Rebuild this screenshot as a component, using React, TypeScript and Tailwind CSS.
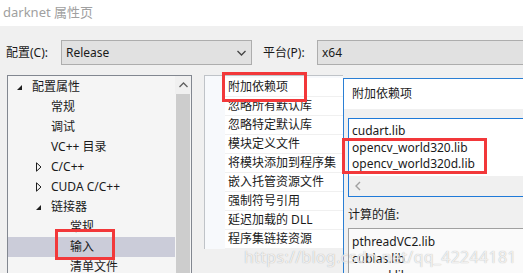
import React from "react";

type TreeItem = {
  label: string;
  level: number;
  arrow?: "open" | "closed";
  selected?: boolean;
};

const treeItems: TreeItem[] = [
  { label: "配置属性", level: 0, arrow: "open" },
  { label: "常规", level: 1 },
  { label: "调试", level: 1 },
  { label: "VC++ 目录", level: 1 },
  { label: "C/C++", level: 1, arrow: "closed" },
  { label: "CUDA C/C++", level: 1, arrow: "closed" },
  { label: "链接器", level: 1, arrow: "open" },
  { label: "常规", level: 2 },
  { label: "输入", level: 2, selected: true },
  { label: "清单文件", level: 2 },
];

const gridRows = [
  "附加依赖项",
  "忽略所有默认库",
  "忽略特定默认库",
  "模块定义文件",
  "将模块添加到程序集",
  "嵌入托管资源文件",
  "强制符号引用",
  "延迟加载的 DLL",
  "程序集链接资源",
];

const indents = ["w-[4px]", "w-[23px]", "w-[42px]"];

const Arrow = ({ kind }: { kind?: "open" | "closed" }) => {
  if (kind === "open")
    return (
      <svg width="7" height="7" viewBox="0 0 7 7">
        <path d="M6 1 L6 6 L1 6 Z" fill="#1e1e1e" />
      </svg>
    );
  if (kind === "closed")
    return (
      <svg width="6" height="10" viewBox="0 0 6 10">
        <path d="M0.5 0.8 L5 5 L0.5 9.2 Z" fill="none" stroke="#1e1e1e" strokeWidth="1" />
      </svg>
    );
  return null;
};

const Chevron = ({ up }: { up?: boolean }) => (
  <svg width="9" height="6" viewBox="0 0 9 6">
    <path
      d={up ? "M0.5 5 L4.5 1 L8.5 5" : "M0.5 1 L4.5 5 L8.5 1"}
      fill="none"
      stroke={up ? "#606060" : "#444"}
      strokeWidth="1.3"
    />
  </svg>
);

const RedBox = ({ className }: { className: string }) => (
  <div className={`absolute border-[3px] border-[#f2383a] pointer-events-none ${className}`} />
);

export default function App() {
  return (
    <div
      className="relative flex h-[273px] w-[523px] flex-col overflow-hidden bg-[#f0f0f0] text-[12px] text-[#1a1a1a]"
      style={{ fontFamily: '"Noto Sans", "Noto Sans CJK SC", sans-serif' }}
    >
      {/* title bar */}
      <div className="flex h-[26px] shrink-0 items-center bg-white pl-[3px] text-[13px] text-[#a0a0a0]">
        darknet 属性页
      </div>

      {/* configuration row */}
      <div className="mt-[14px] flex h-[25px] shrink-0 items-center">
        <span className="w-[61px] pl-[6px]">配置(C):</span>
        <div className="flex h-[25px] w-[191px] items-center justify-between border border-[#adadad] bg-[#e1e1e1] pl-[4px] pr-[5px]">
          <span>Release</span>
          <Chevron />
        </div>
        <span className="ml-[11px] w-[54px]">平台(P):</span>
        <div className="flex h-[25px] flex-1 items-center border border-r-0 border-[#adadad] bg-[#e1e1e1] pl-[4px]">
          x64
        </div>
      </div>

      {/* main area */}
      <div className="mt-[10px] flex h-[198px] shrink-0">
        {/* tree */}
        <div className="ml-[7px] flex w-[185px] border border-b-0 border-[#828790] bg-[#f5f5f5]">
          <div className="flex-1 pt-[1px]">
            {treeItems.map((it, i) => (
              <div
                key={i}
                className={`flex h-[20px] items-center ${it.selected ? "bg-[#cbccd9]" : ""}`}
              >
                <div className={indents[it.level]} />
                <div className="flex w-[15px] items-center justify-center">
                  <Arrow kind={it.arrow} />
                </div>
                <span className="ml-[5px] whitespace-nowrap">{it.label}</span>
              </div>
            ))}
          </div>
          <div className="flex w-[16px] flex-col">
            <div className="flex h-[18px] items-center justify-center bg-[#f0f0f0]">
              <Chevron up />
            </div>
            <div className="mx-[1px] flex-1 bg-[#cdcdcd]" />
          </div>
        </div>

        {/* property grid */}
        <div className="ml-[12px] w-[139px]">
          <div className="flex h-[174px] border-l border-t border-[#bfc3c8] bg-[#f7f9fc] pt-[2px]">
            <div className="w-[20px]" />
            <div className="flex-1 bg-white">
              {gridRows.map((r, i) => (
                <div
                  key={i}
                  className="flex h-[19px] items-center whitespace-nowrap border-b border-[#f0f0f0] pl-[3px]"
                >
                  {r}
                </div>
              ))}
            </div>
          </div>
        </div>

        {/* additional dependencies dialog */}
        <div className="mt-[3px] flex flex-1 flex-col border-l border-t border-[#2b7fd4] bg-[#f0f0f0]">
          <div className="flex h-[30px] shrink-0 items-center bg-white pl-[8px]">附加依赖项</div>
          <div className="flex flex-1 flex-col pl-[4px] pt-[9px]">
            <div className="flex h-[79px] shrink-0 flex-col border border-r-0 border-[#1f7ad8] bg-white">
              <div className="flex-1 pl-[3px] pt-[4px] leading-[16.5px]">
                <div>cudart.lib</div>
                <div>opencv_world320.lib</div>
                <div>opencv_world320d.lib</div>
              </div>
              <div className="flex h-[20px] items-center bg-[#f0f0f0] pl-[6px]">
                <svg width="6" height="10" viewBox="0 0 6 10">
                  <path d="M5 1 L1 5 L5 9" fill="none" stroke="#a0a0a0" strokeWidth="1.4" />
                </svg>
              </div>
            </div>
            <div className="flex h-[28px] shrink-0 items-end pb-[1px]">计算的值:</div>
            <div className="mt-[3px] flex-1 overflow-hidden border-l border-t border-[#a0a0a0] bg-[#fafafa] pl-[3px] pt-[4px] leading-[17px]">
              <div>pthreadVC2.lib</div>
              <div>cublas.lib</div>
              <div>curand.lib</div>
            </div>
          </div>
        </div>
      </div>

      {/* highlight overlays */}
      <RedBox className="left-[222px] top-[72px] h-[30px] w-[85px]" />
      <RedBox className="left-[342px] top-[138px] h-[36px] w-[145px]" />
      <RedBox className="left-[55px] top-[229px] h-[31px] w-[60px]" />

      {/* watermark */}
      <div className="pointer-events-none absolute left-[244px] top-[245px] text-[16px] tracking-[0.3px] text-white/80 [text-shadow:0_0_1px_rgba(0,0,0,0.35)]">
        https://blog.csdn.net/qq_42244181
      </div>
    </div>
  );
}
